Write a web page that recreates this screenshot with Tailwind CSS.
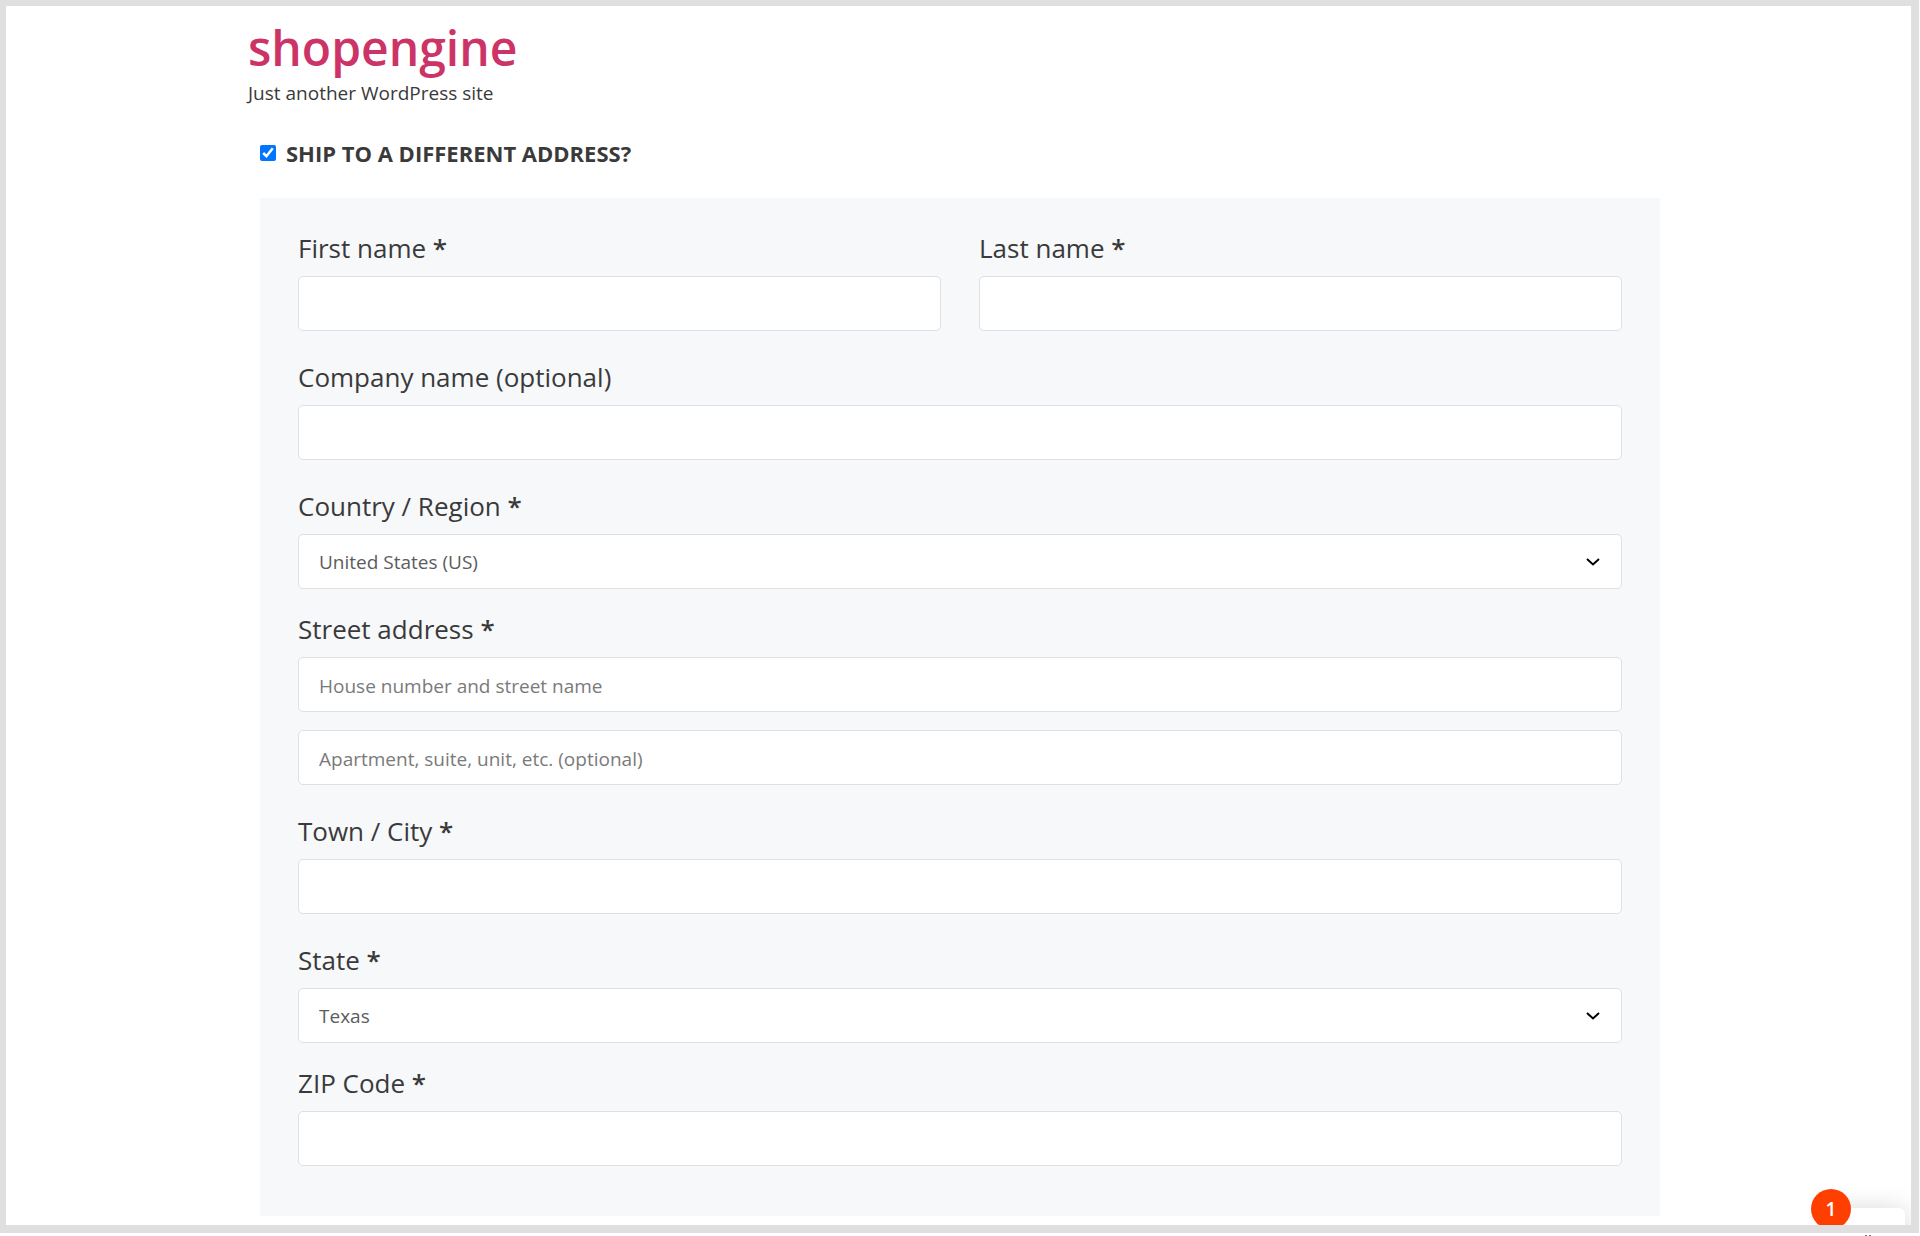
<!DOCTYPE html>
<html lang="en">
<head>
    <meta charset="UTF-8">
    <meta name="viewport" content="width=device-width, initial-scale=1.0">
    <title>shopengine</title>
    <script src="https://cdn.jsdelivr.net/npm/@tailwindcss/browser@4"></script>
</head>
<body class="bg-white pr-px font-['Open_Sans','Noto_Sans',sans-serif] text-[#3a3a3a]">
    <div class="relative overflow-hidden border-t-[6px] border-l-[6px] border-r-8 border-b-8 border-[#dfdfdf] pb-[9px] pl-[3px]">
        <div class="mx-auto w-full max-w-[1424px]">
            <header class="pt-3">
                <h1 class="text-5xl leading-[60px] font-semibold text-[#cc3366]"><a href="#">shopengine</a></h1>
                <p class="text-[19px] leading-[30px]">Just another WordPress site</p>
            </header>

            <main class="px-3 pt-[30px]">
                <form>
                    <div class="flex h-[30px] items-center gap-[10px]">
                        <input type="checkbox" id="ship" name="ship" checked class="size-4 accent-[#0075ff]">
                        <label for="ship" class="text-[22px] leading-[30px] font-bold uppercase">Ship to a different address?</label>
                    </div>

                    <div class="mt-[30px] bg-[#f7f8fa] px-[38px] pt-[34px] pb-[50px]">
                        <div class="grid grid-cols-2 gap-[38px]">
                            <div>
                                <label for="first-name" class="mb-3 block text-[26px] leading-8">First name <b class="font-semibold">*</b></label>
                                <input type="text" id="first-name" name="first-name" required class="block h-[55px] w-full rounded-[5px] border border-[#dde0e4] bg-white px-5 pt-0.5 text-[19px]">
                            </div>
                            <div>
                                <label for="last-name" class="mb-3 block text-[26px] leading-8">Last name <b class="font-semibold">*</b></label>
                                <input type="text" id="last-name" name="last-name" required class="block h-[55px] w-full rounded-[5px] border border-[#dde0e4] bg-white px-5 pt-0.5 text-[19px]">
                            </div>
                        </div>

                        <div class="mt-[30px]">
                            <label for="company" class="mb-3 block text-[26px] leading-8">Company name (optional)</label>
                            <input type="text" id="company" name="company" class="block h-[55px] w-full rounded-[5px] border border-[#dde0e4] bg-white px-5 pt-0.5 text-[19px]">
                        </div>

                        <div class="mt-[30px]">
                            <label for="country" class="mb-3 block text-[26px] leading-8">Country / Region <b class="font-semibold">*</b></label>
                            <div class="relative">
                                <select id="country" name="country" class="block h-[55px] w-full appearance-none rounded-[5px] border border-[#dde0e4] bg-white px-5 pt-0.5 text-[19px] text-[#5c5c5c]">
                                    <option>United States (US)</option>
                                </select>
                                <svg class="pointer-events-none absolute top-6 right-[22px] h-2 w-[14px]" viewBox="0 0 14 8" fill="none" stroke="#000" stroke-width="2"><path d="M1 1l6 5.5L13 1"/></svg>
                            </div>
                        </div>

                        <div class="mt-6">
                            <label for="street" class="mb-3 block text-[26px] leading-8">Street address <b class="font-semibold">*</b></label>
                            <input type="text" id="street" name="street" placeholder="House number and street name" required class="block h-[55px] w-full rounded-[5px] border border-[#dde0e4] bg-white px-5 pt-0.5 text-[19px] placeholder:text-[#7a7a7a]">
                            <input type="text" id="apartment" name="apartment" aria-label="Apartment" placeholder="Apartment, suite, unit, etc. (optional)" class="mt-[18px] block h-[55px] w-full rounded-[5px] border border-[#dde0e4] bg-white px-5 pt-0.5 text-[19px] placeholder:text-[#7a7a7a]">
                        </div>

                        <div class="mt-[30px]">
                            <label for="city" class="mb-3 block text-[26px] leading-8">Town / City <b class="font-semibold">*</b></label>
                            <input type="text" id="city" name="city" required class="block h-[55px] w-full rounded-[5px] border border-[#dde0e4] bg-white px-5 pt-0.5 text-[19px]">
                        </div>

                        <div class="mt-[30px]">
                            <label for="state" class="mb-3 block text-[26px] leading-8">State <b class="font-semibold">*</b></label>
                            <div class="relative">
                                <select id="state" name="state" class="block h-[55px] w-full appearance-none rounded-[5px] border border-[#dde0e4] bg-white px-5 pt-0.5 text-[19px] text-[#5c5c5c]">
                                    <option>Texas</option>
                                </select>
                                <svg class="pointer-events-none absolute top-6 right-[22px] h-2 w-[14px]" viewBox="0 0 14 8" fill="none" stroke="#000" stroke-width="2"><path d="M1 1l6 5.5L13 1"/></svg>
                            </div>
                        </div>

                        <div class="mt-6">
                            <label for="zip" class="mb-3 block text-[26px] leading-8">ZIP Code <b class="font-semibold">*</b></label>
                            <input type="text" id="zip" name="zip" required class="block h-[55px] w-full rounded-[5px] border border-[#dde0e4] bg-white px-5 pt-0.5 text-[19px]">
                        </div>
                    </div>
                </form>
            </main>
        </div>

        <!-- cart widget peeking in from the corner -->
        <div class="absolute right-1.5 -bottom-10 h-[57px] w-[75px] rounded-md bg-white shadow-[0_0_24px_rgba(0,0,0,0.15)]"></div>
        <span class="absolute right-[60px] -bottom-1 flex size-10 items-center justify-center rounded-full bg-[#ff3f00] text-[19px] font-semibold text-white">1</span>
    </div>

    <!-- top edge of the cart icon below the frame -->
    <div class="flex h-[3px] items-end justify-end gap-0.5 pr-12">
        <span class="h-px w-0.5 bg-[#777]"></span>
        <span class="h-px w-0.5 bg-[#777]"></span>
    </div>
</body>
</html>
